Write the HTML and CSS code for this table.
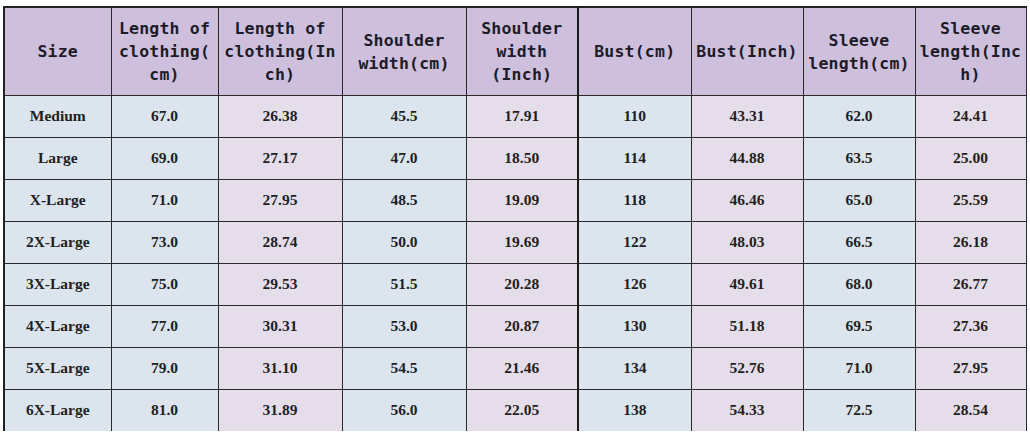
FILE: index.html
```html
<!DOCTYPE html>
<html lang="en">
<head>
<meta charset="utf-8">
<title>Size chart</title>
<link rel="stylesheet" href="styles.css">
</head>
<body>
<table class="chart">
  <colgroup>
    <col class="c-size"><col class="c-lcm"><col class="c-lin"><col class="c-scm"><col class="c-sin"><col class="c-bcm"><col class="c-bin"><col class="c-slcm"><col class="c-slin">
  </colgroup>
  <thead>
    <tr>
      <th>Size</th>
      <th>Length of<br>clothing(<br>cm)</th>
      <th>Length of<br>clothing(In<br>ch)</th>
      <th>Shoulder<br>width(cm)</th>
      <th>Shoulder<br>width<br>(Inch)</th>
      <th class="split">Bust(cm)</th>
      <th>Bust(Inch)</th>
      <th>Sleeve<br>length(cm)</th>
      <th>Sleeve<br>length(Inc<br>h)</th>
    </tr>
  </thead>
  <tbody>
    <tr><td class="b">Medium</td><td class="b">67.0</td><td class="l">26.38</td><td class="b">45.5</td><td class="l">17.91</td><td class="b split">110</td><td class="l">43.31</td><td class="b">62.0</td><td class="l">24.41</td></tr>
    <tr><td class="b">Large</td><td class="b">69.0</td><td class="l">27.17</td><td class="b">47.0</td><td class="l">18.50</td><td class="b split">114</td><td class="l">44.88</td><td class="b">63.5</td><td class="l">25.00</td></tr>
    <tr><td class="b">X-Large</td><td class="b">71.0</td><td class="l">27.95</td><td class="b">48.5</td><td class="l">19.09</td><td class="b split">118</td><td class="l">46.46</td><td class="b">65.0</td><td class="l">25.59</td></tr>
    <tr><td class="b">2X-Large</td><td class="b">73.0</td><td class="l">28.74</td><td class="b">50.0</td><td class="l">19.69</td><td class="b split">122</td><td class="l">48.03</td><td class="b">66.5</td><td class="l">26.18</td></tr>
    <tr><td class="b">3X-Large</td><td class="b">75.0</td><td class="l">29.53</td><td class="b">51.5</td><td class="l">20.28</td><td class="b split">126</td><td class="l">49.61</td><td class="b">68.0</td><td class="l">26.77</td></tr>
    <tr><td class="b">4X-Large</td><td class="b">77.0</td><td class="l">30.31</td><td class="b">53.0</td><td class="l">20.87</td><td class="b split">130</td><td class="l">51.18</td><td class="b">69.5</td><td class="l">27.36</td></tr>
    <tr><td class="b">5X-Large</td><td class="b">79.0</td><td class="l">31.10</td><td class="b">54.5</td><td class="l">21.46</td><td class="b split">134</td><td class="l">52.76</td><td class="b">71.0</td><td class="l">27.95</td></tr>
    <tr><td class="b">6X-Large</td><td class="b">81.0</td><td class="l">31.89</td><td class="b">56.0</td><td class="l">22.05</td><td class="b split">138</td><td class="l">54.33</td><td class="b">72.5</td><td class="l">28.54</td></tr>
  </tbody>
</table>
</body>
</html>
```
FILE: styles.css
```css
html, body {
  margin: 0;
  padding: 0;
  background: #ffffff;
}

body {
  padding: 6px 0 0 3px;
}

.chart {
  border-collapse: collapse;
  table-layout: fixed;
  width: 1022px;
  border-top: 2px solid #222222;
  border-left: 2px solid #222222;
}

.c-size { width: 107px; }
.c-lcm { width: 107px; }
.c-lin { width: 124px; }
.c-scm { width: 124px; }
.c-sin { width: 112px; }
.c-bcm { width: 113px; }
.c-bin { width: 112px; }
.c-slcm { width: 112px; }
.c-slin { width: 111px; }

.chart th,
.chart td {
  border: 1px solid #2a2a2a;
  text-align: center;
  vertical-align: middle;
  padding: 0;
}

.chart th {
  height: 87px;
  background: #cec0dc;
  color: #1d1b28;
  font-family: "DejaVu Sans Mono", "Liberation Mono", monospace;
  font-weight: bold;
  font-size: 16.5px;
  line-height: 23px;
  letter-spacing: 0.2px;
}

.chart td {
  height: 40px;
  padding-bottom: 1px;
  color: #1f1f1f;
  font-family: "Liberation Serif", "DejaVu Serif", serif;
  font-weight: bold;
  font-size: 15.5px;
}

.chart td.b { background: #dce5ee; }
.chart td.l { background: #e5dde9; }

.chart .split {
  border-left: 2px solid #1a1a1a;
}

.chart tbody tr:last-child td {
  border-bottom: none;
}
```
